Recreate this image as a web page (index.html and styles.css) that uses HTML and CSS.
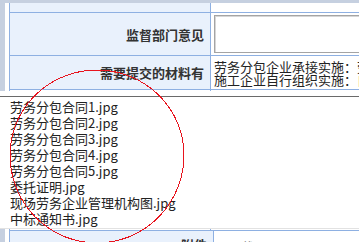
FILE: index.html
```html
<!DOCTYPE html>
<html lang="zh-CN">
<head>
<meta charset="utf-8">
<title>材料</title>
<link rel="stylesheet" href="styles.css">
</head>
<body>
<div class="page">
  <div class="panel">
    <table class="form">
      <tr class="r1"><th></th><td></td></tr>
      <tr class="r2"><th>监督部门意见</th><td><div class="textbox"></div></td></tr>
      <tr class="r3"><th>需要提交的材料有</th><td class="materials">劳务分包企业承接实施：劳务分包合同、委托证明、现场劳务企业管理机构图、中标通知书<br>施工企业自行组织实施：自有劳务人员名册、现场管理机构图、中标通知书</td></tr>
      <tr class="r4"><th></th><td></td></tr>
    </table>
    <table class="form lower">
      <tr class="r5"><th>附件</th><td class="gray">下载</td></tr>
    </table>
  </div>
  <div class="popup">
    <ul class="files">
      <li>劳务分包合同1.jpg</li>
      <li>劳务分包合同2.jpg</li>
      <li>劳务分包合同3.jpg</li>
      <li>劳务分包合同4.jpg</li>
      <li>劳务分包合同5.jpg</li>
      <li>委托证明.jpg</li>
      <li>现场劳务企业管理机构图.jpg</li>
      <li>中标通知书.jpg</li>
    </ul>
  </div>
  <svg class="mark" width="359" height="242" viewBox="0 0 359 242">
    <path d="M10,155 A87,85 0 0 1 184,155 A87,88 0 0 1 10,155" fill="none" stroke="#e8141e" stroke-width="1" shape-rendering="crispEdges"/>
  </svg>
</div>
</body>
</html>
```
FILE: styles.css
```css
html, body {
  margin: 0;
  padding: 0;
}
body {
  width: 359px;
  height: 242px;
  overflow: hidden;
  background: #c6d0e0;
  font-family: "Noto Sans CJK SC", sans-serif;
  font-size: 13px;
  color: #222;
}
.page {
  position: relative;
  width: 359px;
  height: 242px;
  overflow: hidden;
  padding: 3px 0 0 5px;
  box-sizing: border-box;
}
.panel {
  background: #fff;
  padding-left: 4px;
  height: 100%;
}
.form {
  border-collapse: collapse;
  table-layout: fixed;
  width: 600px;
}
.form th, .form td {
  border: 1px solid #8eb0e2;
  padding: 0;
}
.form th {
  width: 194px;
  padding-right: 6px;
  background: #e9f1fc;
  text-align: right;
  font-weight: bold;
  color: #333;
  line-height: 15px;
}
.form td {
  background: #fff;
}
.r1 th, .r1 td {
  border-top: none;
  height: 9px;
}
.r2 th, .r2 td {
  height: 42px;
}
.r3 th, .r3 td {
  height: 33px;
}
.r4 th, .r4 td {
  height: 140px;
  background: #fff;
  border-bottom: none;
}
.textbox {
  margin-left: 3px;
  height: 36px;
  border: 1px solid #a4a4a4;
  box-shadow: inset 1px 1px 0 #d6d6d6;
  background: #fff;
}
.materials {
  padding-left: 3px !important;
  line-height: 13px;
  white-space: nowrap;
  color: #222;
}
.lower th {
  width: 197px;
}
.r5 th, .r5 td {
  height: 20px;
  vertical-align: top;
  padding-top: 6px;
}
.r5 td.gray {
  color: #888;
  padding-left: 14px;
}
.popup {
  position: absolute;
  left: 0;
  top: 91px;
  width: 359px;
  background: #fff;
  padding-top: 5px;
}
.files {
  list-style: none;
  margin: 0;
  padding: 2px 0 1px 10px;
  border-top: 1px solid #6a6a6a;
  border-bottom: 1px solid #e2e2e2;
  line-height: 16px;
  color: #222;
}
.mark {
  position: absolute;
  left: 0;
  top: 0;
  pointer-events: none;
}
```
